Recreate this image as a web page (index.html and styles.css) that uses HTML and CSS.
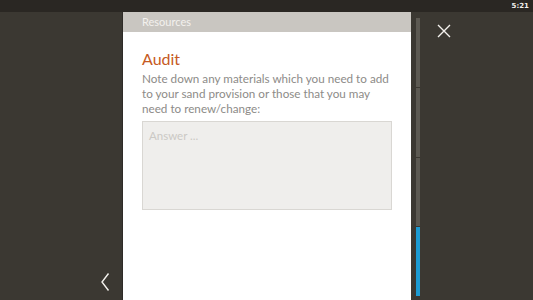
FILE: index.html
```html
<!DOCTYPE html>
<html>
<head>
<meta charset="utf-8">
<link rel="stylesheet" href="styles.css">
</head>
<body>
<div class="status"><span class="time">5:21</span></div>
<div class="main">
  <div class="left">
    <svg class="chev" width="10" height="20" viewBox="0 0 10 20"><path d="M8.5 1.5 L2 10 L8.5 18.5" fill="none" stroke="#f4f2ee" stroke-width="1.4"/></svg>
  </div>
  <div class="card">
    <div class="card-head">Resources</div>
    <div class="card-body">
      <h1 class="title">Audit</h1>
      <p class="desc">Note down any materials which you need to add to your sand provision or those that you may need to renew/change:</p>
      <div class="answer">Answer ...</div>
    </div>
  </div>
  <div class="right">
    <div class="progress">
      <div class="seg"></div>
      <div class="seg"></div>
      <div class="seg"></div>
      <div class="seg active"></div>
    </div>
    <svg class="close" width="14" height="14" viewBox="0 0 14 14"><path d="M1 1 L13 13 M13 1 L1 13" stroke="#f4f2ee" stroke-width="1.4" fill="none"/></svg>
  </div>
</div>
</body>
</html>
```

FILE: styles.css
```css
html, body { margin: 0; padding: 0; }
body {
  width: 533px; height: 300px; overflow: hidden;
  background: #3b3832;
  font-family: "Lato", "Open Sans", sans-serif;
  display: flex; flex-direction: column;
}
.status {
  height: 12px; background: #2a2723;
  display: flex; justify-content: flex-end; align-items: center;
  padding-right: 4px;
}
.time { color: #f2f0ec; font-size: 7px; font-weight: 700; font-family: "DejaVu Sans", sans-serif; }
.main { flex: 1; display: flex; min-height: 0; }
.left {
  width: 123px; display: flex; justify-content: flex-end; align-items: flex-end;
  padding-bottom: 8px; box-sizing: border-box; padding-right: 13px;
}
.card {
  width: 288px; background: #fff; display: flex; flex-direction: column;
  box-shadow: -1px 0 0 #2e2b27;
}
.card-head {
  height: 20px; background: #c9c6c1; color: #f3f1ee;
  font-size: 11px; line-height: 20px; padding-left: 19px;
}
.card-body { padding: 17px 19px 0 19px; }
.title { margin: 0; font-weight: 400; font-size: 16px; line-height: 20px; color: #c65a23; }
.desc { margin: 2px -6px 0 0; font-size: 11.7px; line-height: 15px; color: #8d8b88; }
.answer {
  margin-top: 5px; width: 250px; height: 89px; box-sizing: border-box;
  background: #efeeec; border: 1px solid #d9d7d3;
  color: #cbc9c5; font-size: 11.5px; padding: 7px 6px;
}
.right { flex: 1; display: flex; padding-left: 5px; }
.progress {
  width: 4px; display: flex; flex-direction: column; gap: 1px;
  padding-top: 6px; padding-bottom: 4px;
}
.seg { flex: 1; background: #5c5952; }
.seg.active { background: #1c9bd2; }
.close { margin-left: 17px; margin-top: 12px; }
```
